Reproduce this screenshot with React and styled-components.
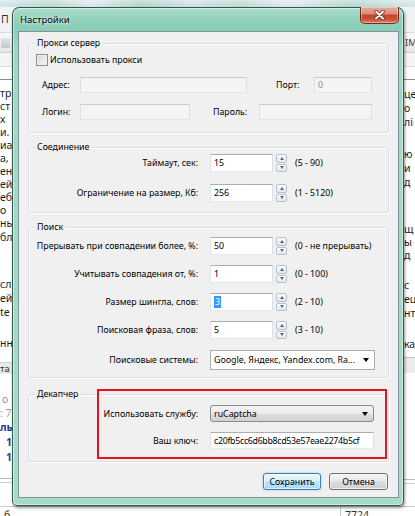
import React from "react";
import styled, { createGlobalStyle } from "styled-components";

const FONT = `"Noto Sans", "Open Sans", "DejaVu Sans", sans-serif`;

const GlobalStyle = createGlobalStyle`
  html, body { margin: 0; padding: 0; background: #fff; }
  body { font-family: ${FONT}; }
  * { box-sizing: border-box; }
`;

const Screen = styled.div`
  width: 415px;
  height: 516px;
  overflow: hidden;
  display: grid;
  grid-template-columns: 12px 392px 11px;
  grid-template-rows: 7px 499px 10px;
  background: #fff;
`;

const GlassStrip = styled.div`
  grid-column: 1 / -1;
  grid-row: 1;
  background:
    linear-gradient(180deg, rgba(255, 255, 255, 0.35), rgba(255, 255, 255, 0) 70%),
    linear-gradient(90deg, #d5e6e9 0%, #bcd9d3 12%, #dfe9ec 22%, #b4d5cd 34%, #cfe2e3 46%, #c0dbd6 58%, #e0eaed 70%, #b9d8d1 84%, #d6e6e8 100%);
`;

/* ---------- background window slivers ---------- */

const BgPane = styled.div`
  grid-row: 2;
  grid-column: ${(p) => p.$col};
  overflow: hidden;
  display: flex;
  flex-direction: column;
  background: #fff;
  font-family: ${FONT};
  font-size: 10.5px;
  color: #1d1d1d;
  white-space: nowrap;
`;

const BgMenu = styled.div`
  flex: none;
  height: 25px;
  line-height: 25px;
  padding-left: 1px;
  background: #f1f2f4;
  color: #333;
`;

const BgToolbar = styled.div`
  flex: none;
  height: 20px;
  display: flex;
  align-items: center;
  gap: 2px;
  padding-left: 1px;
  border-top: 1px solid #d6dbe0;
  background: linear-gradient(#f7f8fa, #e4e8ec);
  font-size: 9.5px;
  color: #444;
`;

const BgIcon = styled.span`
  width: 9px;
  height: 10px;
  border-radius: 1px;
  background: linear-gradient(#d3dbe3, #a3b1be);
  opacity: 0.6;
`;

const BgBand = styled.div`
  flex: none;
  height: ${(p) => p.$h}px;
  line-height: ${(p) => p.$h}px;
  background: ${(p) => p.$bg || "transparent"};
  border-top: ${(p) => p.$bt || "none"};
  border-bottom: ${(p) => p.$bb || "none"};
  font-size: 9.5px;
  color: #333;
`;

const BgLine = styled.div`
  flex: none;
  height: ${(p) => p.$h || 13.1}px;
  line-height: ${(p) => p.$h || 13.1}px;
  padding-left: ${(p) => p.$pl || 0}px;
  color: ${(p) => p.$c || "#1d1d1d"};
  font-weight: ${(p) => (p.$b ? 700 : 400)};
`;

const BottomStrip = styled.div`
  grid-column: 1 / -1;
  grid-row: 3;
  display: flex;
  border-top: 1px solid #c8c8c8;
  background: #fff;
  font-size: 10.5px;
  color: #333;
  white-space: nowrap;
  overflow: hidden;
`;

const BottomCell = styled.div`
  flex: none;
  width: ${(p) => p.$w}px;
  padding: 2px 0 0 ${(p) => p.$pl}px;
  line-height: 12px;
  border-left: ${(p) => (p.$sep ? "1px solid #c8c8c8" : "none")};
`;

/* ---------- dialog ---------- */

const Dialog = styled.div`
  grid-column: 2;
  grid-row: 2;
  display: flex;
  flex-direction: column;
  border: 1px solid rgba(28, 52, 46, 0.8);
  border-radius: 7px 7px 5px 5px;
  padding: 0 4px 7px 5px;
  background: linear-gradient(180deg, #a9ddcc 0px, #90d0ba 12px, #8ccdb6 23px, #9ed8c4 40px, #a6dbc9 100%);
  box-shadow: inset 0 0 0 1px rgba(255, 255, 255, 0.5), 1px 2px 3px rgba(0, 0, 0, 0.4);
  font-family: ${FONT};
`;

const TitleBar = styled.div`
  flex: none;
  height: 23px;
  display: flex;
  justify-content: space-between;
  align-items: flex-start;
`;

const Title = styled.div`
  padding: 5px 0 0 2px;
  font-size: 9.5px;
  line-height: 13px;
  color: #000;
  text-shadow: 0 0 5px rgba(255, 255, 255, 0.9), 0 0 2px rgba(255, 255, 255, 0.8);
`;

const CloseButton = styled.div`
  width: 39px;
  height: 17px;
  margin-top: -1px;
  border: 1px solid rgba(90, 28, 18, 0.85);
  border-top: none;
  border-radius: 0 0 5px 5px;
  background: linear-gradient(180deg, #e9ad9c 0%, #dc8b77 42%, #c8452c 52%, #c9502f 75%, #df8068 100%);
  box-shadow: inset 0 0 0 1px rgba(255, 255, 255, 0.35);
  display: flex;
  align-items: center;
  justify-content: center;
`;

const Client = styled.div`
  flex: 1;
  display: flex;
  flex-direction: column;
  padding: 0 9px;
  border: 1px solid #7d939e;
  background: #f0f0f0;
  font-size: 8.8px;
  color: #000;
`;

const GroupBox = styled.div`
  position: relative;
  flex: none;
  display: flex;
  flex-direction: column;
  height: ${(p) => p.$h}px;
  margin-top: ${(p) => p.$mt}px;
  border: 1px solid #d5dfe5;
  border-radius: 3px;
  box-shadow: inset 1px 1px 0 #fff, 1px 1px 0 #fff;
`;

const Legend = styled.div`
  align-self: flex-start;
  height: 14px;
  line-height: 14px;
  margin: -8px 0 0 6px;
  padding: 0 2px;
  background: #f0f0f0;
`;

const Highlight = styled.div`
  position: absolute;
  top: -6px;
  left: 68px;
  right: 1px;
  bottom: 2px;
  border: 2px solid #e3141d;
  pointer-events: none;
`;

const FormRow = styled.div`
  flex: none;
  display: flex;
  align-items: stretch;
  height: ${(p) => p.$h}px;
  margin-top: ${(p) => p.$mt}px;
  padding-left: ${(p) => p.$pl || 0}px;
`;

const FieldLabel = styled.div`
  flex: none;
  width: ${(p) => p.$w}px;
  margin-left: ${(p) => p.$ml || 0}px;
  display: flex;
  align-items: center;
  justify-content: ${(p) => (p.$right ? "flex-end" : "flex-start")};
  white-space: nowrap;
`;

const TextBox = styled.div`
  flex: none;
  width: ${(p) => p.$w}px;
  margin-left: ${(p) => p.$ml || 0}px;
  display: flex;
  align-items: center;
  padding-left: 3px;
  overflow: hidden;
  white-space: nowrap;
  letter-spacing: ${(p) => (p.$tight ? "-0.3px" : "normal")};
  border: 1px solid;
  border-color: ${(p) =>
    p.$disabled ? "#c9cbcf #dcdfe3 #e2e5e8 #dcdfe3" : "#abadb3 #dbdfe6 #e3e9ef #e2e3ea"};
  background: ${(p) => (p.$disabled ? "#f4f4f4" : "#fff")};
  color: ${(p) => (p.$disabled ? "#8d8d8d" : "#000")};
`;

const Selected = styled.span`
  background: #3399ff;
  color: #fff;
  padding: 0 1px;
  line-height: 12px;
`;

const Spinner = styled.div`
  flex: none;
  width: 11px;
  margin-left: 3px;
  display: flex;
  flex-direction: column;
  gap: 1px;
`;

const SpinButton = styled.div`
  flex: 1;
  display: flex;
  align-items: center;
  justify-content: center;
  border: 1px solid #b8c0c9;
  border-radius: 2px;
  background: linear-gradient(#fbfcfd, #e3e8ee);
  &::after {
    content: "";
    border-left: 2.5px solid transparent;
    border-right: 2.5px solid transparent;
    ${(p) => (p.$down ? "border-top: 3px solid #556a8c;" : "border-bottom: 3px solid #556a8c;")}
  }
`;

const Range = styled.div`
  flex: none;
  margin-left: 8px;
  display: flex;
  align-items: center;
  white-space: nowrap;
`;

const Combo = styled.div`
  flex: none;
  width: ${(p) => p.$w}px;
  margin-left: ${(p) => p.$ml || 0}px;
  display: flex;
  align-items: center;
  justify-content: space-between;
  padding: 0 5px 0 3px;
  white-space: nowrap;
  border: 1px solid ${(p) => (p.$button ? "#8a8a8a" : "#abadb3")};
  border-radius: ${(p) => (p.$button ? "3px" : "0")};
  background: ${(p) =>
    p.$button ? "linear-gradient(#f3f3f3, #ebebeb 50%, #dedede 50%, #d2d2d2)" : "#fff"};
  &::after {
    content: "";
    border-left: 3.5px solid transparent;
    border-right: 3.5px solid transparent;
    border-top: 4px solid #000;
  }
`;

const CheckRow = styled(FormRow)`
  align-items: center;
  gap: 2px;
`;

const CheckBox = styled.div`
  width: 12px;
  height: 12px;
  border: 1px solid #8f8f8f;
  background: linear-gradient(135deg, #d6d6d6, #f7f7f7);
  box-shadow: inset 0 0 0 1px #eeeeee;
`;

const ButtonRow = styled.div`
  flex: none;
  display: flex;
  justify-content: flex-end;
  gap: 8px;
  margin-top: 11px;
  padding-right: 1px;
`;

const PushButton = styled.div`
  width: ${(p) => p.$w}px;
  height: 17px;
  display: flex;
  align-items: center;
  justify-content: center;
  border: 1px solid ${(p) => (p.$default ? "#3c7fb1" : "#707070")};
  border-radius: 3px;
  background: ${(p) =>
    p.$default
      ? "linear-gradient(#eaf6fd, #d9f0fc 50%, #bee6fd 50%, #a7d9f5)"
      : "linear-gradient(#f2f2f2, #ebebeb 50%, #dddddd 50%, #cfcfcf)"};
  box-shadow: inset 0 0 0 1px rgba(255, 255, 255, 0.65)
    ${(p) => (p.$default ? ", 0 0 2px rgba(80, 170, 230, 0.7)" : "")};
`;

const CloseGlyph = () => (
  <svg width="11" height="10" viewBox="0 0 11 10">
    <path d="M2 1.5 L9 8.5 M9 1.5 L2 8.5" stroke="#5a2418" strokeWidth="3.4" strokeLinecap="round" />
    <path d="M2 1.5 L9 8.5 M9 1.5 L2 8.5" stroke="#fff" strokeWidth="2" strokeLinecap="round" />
  </svg>
);

const SpinField = ({ label, value, range, mt }) => (
  <FormRow $h={18} $mt={mt}>
    <FieldLabel $w={169} $right>{label}</FieldLabel>
    <TextBox $w={63} $ml={12}>{value}</TextBox>
    <Spinner>
      <SpinButton />
      <SpinButton $down />
    </Spinner>
    <Range>{range}</Range>
  </FormRow>
);

const leftLines = ["тр", "ст", "х", "и.", "иа", "а,", "ен", "ей", "еб", "о", "нь", "бл"];

export default function App() {
  return (
    <>
      <GlobalStyle />
      <Screen>
        <GlassStrip />

        <BgPane $col={1}>
          <BgMenu>П</BgMenu>
          <BgToolbar>
            <BgIcon />
          </BgToolbar>
          <BgBand $h={15} $bg="#f4f4f4" $bt="1px solid #cfcfcf" $bb="1px solid #dcdcdc" />
          <BgBand $h={12} />
          <BgBand $h={1} $bg="#8c8c8c" />
          <BgBand $h={6.5} />
          {leftLines.map((t, i) => (
            <BgLine key={i}>{t}</BgLine>
          ))}
          <BgBand $h={33.3} />
          <BgLine $h={14}>сл</BgLine>
          <BgLine $h={14}>ей</BgLine>
          <BgLine $h={14}>te</BgLine>
          <BgBand $h={17} />
          <BgLine $h={14}>нн</BgLine>
          <BgBand $h={12} />
          <BgBand $h={12} $bg="#e9e9e9" $bt="1px solid #cfcfcf">та</BgBand>
          <BgBand $h={18} />
          <BgLine $h={14} $pl={2} $c="#9a9a9a">о</BgLine>
          <BgLine $h={14} $c="#9a9a9a">: 7</BgLine>
          <BgLine $h={15} $c="#1f3a9e" $b>ль</BgLine>
          <BgLine $h={15} $pl={6} $c="#1f3a9e" $b>1</BgLine>
          <BgLine $h={14} $pl={6} $c="#1f3a9e" $b>1</BgLine>
          <BgBand $h={14} />
          <BgBand $h={1} $bg="#bdbdbd" />
          <BgBand $h={3} />
          <BgBand $h={1} $bg="#d0d0d0" />
        </BgPane>

        <BgPane $col={3}>
          <BgMenu />
          <BgToolbar>IМ</BgToolbar>
          <BgBand $h={15} $bg="#f4f4f4" $bt="1px solid #cfcfcf" $bb="1px solid #dcdcdc" />
          <BgBand $h={12} />
          <BgBand $h={1} $bg="#8c8c8c" />
          <BgBand $h={6.5} />
          <BgLine $h={14}>це</BgLine>
          <BgLine $h={14}>о</BgLine>
          <BgLine $h={14}>лі</BgLine>
          <BgBand $h={18} />
          <BgLine $h={14}>ю</BgLine>
          <BgLine $h={14}>и</BgLine>
          <BgLine $h={14}>д</BgLine>
          <BgBand $h={34} />
          <BgLine $h={13}>щ</BgLine>
          <BgLine $h={13}>ы</BgLine>
          <BgLine $h={13}>д</BgLine>
          <BgBand $h={16} />
          <BgLine $h={14}>с</BgLine>
          <BgLine $h={14}>ец</BgLine>
          <BgLine $h={14}>нт</BgLine>
          <BgBand $h={17} />
          <BgLine $h={14}>ка</BgLine>
          <BgBand $h={6} />
          <BgBand $h={16} $bg="#ebebeb" $bt="1px solid #c4c4c4" />
          <BgBand $h={106} />
          <BgBand $h={1} $bg="#bdbdbd" />
          <BgBand $h={3} />
          <BgBand $h={1} $bg="#d0d0d0" />
        </BgPane>

        <BottomStrip>
          <BottomCell $w={340} $pl={4}>б</BottomCell>
          <BottomCell $w={75} $pl={4} $sep>7724</BottomCell>
        </BottomStrip>

        <Dialog>
          <TitleBar>
            <Title>Настройки</Title>
            <CloseButton>
              <CloseGlyph />
            </CloseButton>
          </TitleBar>

          <Client>
            <GroupBox $h={90} $mt={11}>
              <Legend>Прокси сервер</Legend>
              <CheckRow $h={14} $mt={3} $pl={7}>
                <CheckBox />
                <span>Использовать прокси</span>
              </CheckRow>
              <FormRow $h={16} $mt={10} $pl={13}>
                <FieldLabel $w={38}>Адрес:</FieldLabel>
                <TextBox $w={167} $disabled />
                <FieldLabel $w={38} $ml={29}>Порт:</FieldLabel>
                <TextBox $w={58} $disabled>0</TextBox>
              </FormRow>
              <FormRow $h={16} $mt={11} $pl={13}>
                <FieldLabel $w={38}>Логин:</FieldLabel>
                <TextBox $w={110} $disabled />
                <FieldLabel $w={46} $ml={23}>Пароль:</FieldLabel>
                <TextBox $w={113} $disabled />
              </FormRow>
            </GroupBox>

            <GroupBox $h={66} $mt={14}>
              <Legend>Соединение</Legend>
              <SpinField mt={0} label="Таймаут, сек:" value="15" range="(5 - 90)" />
              <SpinField mt={12} label="Ограничение на размер, Кб:" value="256" range="(1 - 5120)" />
            </GroupBox>

            <GroupBox $h={151} $mt={14}>
              <Legend>Поиск</Legend>
              <SpinField mt={3} label="Прерывать при совпадении более, %:" value="50" range="(0 - не прерывать)" />
              <SpinField mt={10} label="Учитывать совпадения от, %:" value="1" range="(0 - 100)" />
              <SpinField mt={10} label="Размер шингла, слов:" value={<Selected>3</Selected>} range="(2 - 10)" />
              <SpinField mt={10} label="Поисковая фраза, слов:" value="5" range="(3 - 10)" />
              <FormRow $h={20} $mt={11}>
                <FieldLabel $w={169} $right>Поисковые системы:</FieldLabel>
                <Combo $w={165} $ml={12}>Google, Яндекс, Yandex.com, Ra...</Combo>
              </FormRow>
            </GroupBox>

            <GroupBox $h={68} $mt={16}>
              <Legend>Декапчер</Legend>
              <FormRow $h={17} $mt={4}>
                <FieldLabel $w={169} $right>Использовать службу:</FieldLabel>
                <Combo $w={164} $ml={12} $button>ruCaptcha</Combo>
              </FormRow>
              <FormRow $h={17} $mt={10}>
                <FieldLabel $w={169} $right>Ваш ключ:</FieldLabel>
                <TextBox $w={164} $ml={12} $tight>c20fb5cc6d6bb8cd53e57eae2274b5cf</TextBox>
              </FormRow>
              <Highlight />
            </GroupBox>

            <ButtonRow>
              <PushButton $w={58} $default>Сохранить</PushButton>
              <PushButton $w={59}>Отмена</PushButton>
            </ButtonRow>
          </Client>
        </Dialog>
      </Screen>
    </>
  );
}
